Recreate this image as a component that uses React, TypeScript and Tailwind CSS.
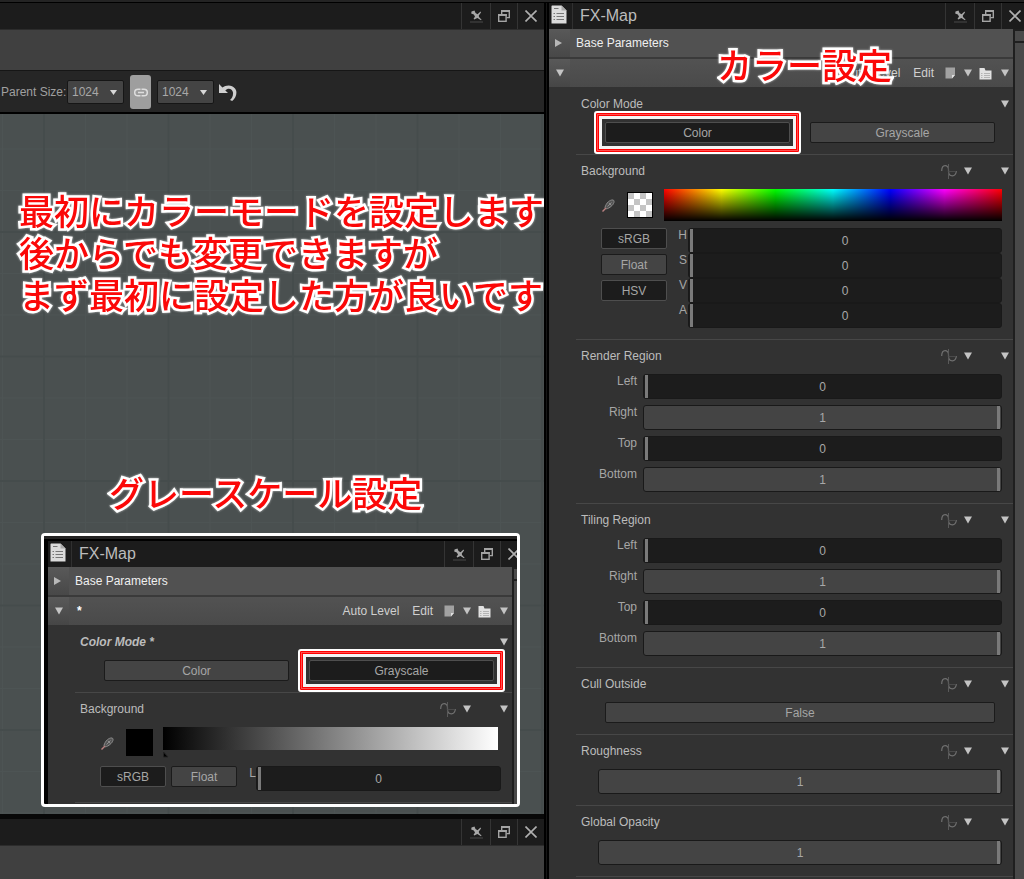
import { useId } from "react";
import type { ReactNode } from "react";

function PinIcon() {
  return (
    <svg width="13" height="13" viewBox="0 0 13 13" fill="#a8a8a8">
      <path d="M1.5 1.5 L4.5 0.5 L5.5 3 L7.5 4.2 L10.5 1.6 L11 2.4 L8.8 5.6 L9 7 L11.6 9.8 L11 10.2 L7.4 8 L4.2 9.6 L3.6 8.8 L5 6.4 L3.8 4.4 L1.2 3.4 Z" />
      <path d="M0 11.5 H13 V12.5 H0 Z" fill="#484848" />
    </svg>
  );
}

function RestoreIcon() {
  return (
    <svg width="12" height="12" viewBox="0 0 12 12" fill="none" stroke="#a4a4a4" strokeWidth="1.4">
      <path d="M3.7 4 V0.7 H11.3 V7.6 H8.5" />
      <path d="M3 1 H12" strokeWidth="2" />
      <rect x="0.7" y="4.7" width="7.4" height="6.6" />
      <path d="M0 5 H8.8" strokeWidth="2" />
    </svg>
  );
}

function CloseIcon() {
  return (
    <svg width="12" height="12" viewBox="0 0 12 12" stroke="#b0b0b0" strokeWidth="1.6">
      <path d="M0.5 0.5 L11.5 11.5 M11.5 0.5 L0.5 11.5" />
    </svg>
  );
}

function DocIcon() {
  return (
    <svg width="16" height="19" viewBox="0 0 16 19">
      <path d="M1 0.5 H10.5 L15.5 5.5 V18.5 H0.5 V1 Z" fill="#dcdcdc" />
      <path d="M10.5 0.5 V5.5 H15.5 Z" fill="#a9a9a9" />
      <path d="M3 3.5 H7.5 M5.5 8.5 H13 M5.5 11.5 H13 M5.5 14.5 H13 M2.5 8.5 H4 M2.5 11.5 H4 M2.5 14.5 H4" stroke="#777" />
    </svg>
  );
}

function NoteIcon() {
  return (
    <svg width="11" height="12" viewBox="0 0 11 12">
      <path d="M0.5 0.5 H10 V8 L7 11.5 H0.5 Z" fill="#a2a2a2" />
      <path d="M10 8 H7 V11.5 Z" fill="#e0e0e0" />
    </svg>
  );
}

function PresetIcon() {
  return (
    <svg width="13" height="13" viewBox="0 0 13 13">
      <path d="M0.5 1 H5.5 L6.5 3.5 H12.5 V12.5 H0.5 Z" fill="#e2e2e2" />
      <path d="M2 6.5 H3.5 M5 6.5 H11 M2 8.5 H3.5 M5 8.5 H11 M2 10.5 H3.5 M5 10.5 H11" stroke="#b4b4b4" />
    </svg>
  );
}

function WaveIcon() {
  return (
    <svg width="16" height="15" viewBox="0 0 16 15" fill="none" stroke="#707070">
      <path d="M0.7 7 C0.7 -0.4 7.5 0.4 7.5 5.5 V7.5 C7.5 13 15.3 13.6 15.3 7" strokeWidth="1.2" />
      <path d="M7.5 0 V15" stroke="#5a5a5a" />
      <path d="M7.5 7.5 H15" stroke="#4a4a4a" />
    </svg>
  );
}

function PipetteIcon() {
  return (
    <svg width="13" height="13" viewBox="0 0 13 13" fill="none" stroke="#8c8c8c">
      <path d="M3 8.5 C4 4 8 0.5 11 1 C13 1.5 12 5 9.5 7 C7.5 9 5.5 9.5 4.5 10 Z" fill="#555" />
      <path d="M5.5 7.5 L9.5 3.5 M7 4 L9.5 6.5" />
      <path d="M0.5 12.5 L4 9" stroke="#b98080" strokeWidth="1.4" />
    </svg>
  );
}

function LinkIcon() {
  return (
    <svg width="14" height="9" viewBox="0 0 14 9" fill="none" stroke="#dedede" strokeWidth="1.5">
      <path d="M6.5 1.2 H4 A3.3 3.3 0 0 0 4 7.8 H6.5 M7.5 1.2 H10 A3.3 3.3 0 0 1 10 7.8 H7.5 M4 4.5 H10" />
    </svg>
  );
}

function UndoIcon() {
  return (
    <svg width="18" height="17" viewBox="0 0 18 17" fill="#cfcfcf">
      <path d="M0 0 V9 H9 L6.3 6.4 C9 3.6 13.4 4.6 14 8.6 C14.3 11.6 13 14.2 11 16 L13.2 17 C17.2 13.5 18.8 8 16 4.4 C13 0.4 7 0.8 3.4 3.4 Z" />
    </svg>
  );
}

function Down() {
  return (
    <svg width="8" height="8" viewBox="0 0 8 8" className="shrink-0" fill="#c4c4c4">
      <path d="M0 0.5 H8 L4 7.5 Z" />
    </svg>
  );
}

function TitleBar({ title }: { title?: string }) {
  return (
    <div className="flex h-[26px] shrink-0 items-stretch bg-[#1c1c1c]">
      {title && (
        <>
          <div className="flex w-[24px] items-start border-r border-[#303030] pt-0.5 pl-0.5">
            <DocIcon />
          </div>
          <h2 className="flex items-center pl-[7px] text-[16px] text-[#bcbcbc]">{title}</h2>
        </>
      )}
      <div className="flex-1" />
      <button aria-label="Pin" className="flex w-[29px] items-center justify-center border-l border-[#343434]">
        <PinIcon />
      </button>
      <button aria-label="Restore" className="flex w-[27px] items-center justify-center border-l border-[#343434]">
        <RestoreIcon />
      </button>
      <button aria-label="Close" className="flex w-[27px] items-center justify-center border-l border-[#343434]">
        <CloseIcon />
      </button>
    </div>
  );
}

function Toggle({ label, pressed, marked, className }: { label: string; pressed?: boolean; marked?: boolean; className?: string }) {
  return (
    <button
      aria-pressed={!!pressed}
      className={`relative h-[21px] rounded-[2px] border text-[#a6a6a6] ${
        pressed ? "border-[#4e4e4e] bg-[#1c1c1c]" : "border-[#1b1b1b] bg-[#444]"
      } ${className ?? ""}`}
    >
      {label}
      {marked && (
        <span className="pointer-events-none absolute -inset-[12px] rounded-[3px] border-2 border-white shadow-[inset_0_0_0_1px_#f00,inset_0_0_0_2px_#ff5050,inset_0_0_0_3px_#f00,inset_0_0_0_6px_#f4f4f4]" />
      )}
    </button>
  );
}

function Slider({ id, value, label }: { id?: string; value: number; label?: string }) {
  return (
    <div className="grid h-[25px] flex-1">
      <input
        id={id}
        aria-label={label}
        type="range"
        min={0}
        max={1}
        step={0.01}
        defaultValue={value}
        className={`col-start-1 row-start-1 h-full w-full appearance-none rounded-[3px] border border-[#191919] px-px [&::-webkit-slider-thumb]:h-[23px] [&::-webkit-slider-thumb]:w-[3px] [&::-webkit-slider-thumb]:appearance-none [&::-webkit-slider-thumb]:bg-[#7a7a7a] ${
          value ? "bg-[#444]" : "bg-[#1c1c1c]"
        }`}
      />
      <span className="pointer-events-none col-start-1 row-start-1 self-center text-center text-[#a8a8a8]">{value}</span>
    </div>
  );
}

function LabeledSlider({ label, value, labelClass }: { label: string; value: number; labelClass: string }) {
  const id = useId();
  return (
    <div className="flex items-start">
      <label htmlFor={id} className={`leading-[14px] text-[#a6a6a6] ${labelClass}`}>
        {label}
      </label>
      <Slider id={id} value={value} />
    </div>
  );
}

function Section({ title, edited, first, children }: { title: string; edited?: boolean; first?: boolean; children?: ReactNode }) {
  return (
    <section className={`ml-[27px] pb-[11px] ${first ? "pt-px" : "border-t border-[#474747]"}`}>
      <div className="mb-0.5 flex h-8 items-center pr-1 pl-[5px]">
        <h3 className={`flex-1 text-[#bcbcbc] ${edited ? "font-bold italic" : ""}`}>{title}</h3>
        {!first && (
          <>
            <WaveIcon />
            <button aria-label={`${title} function`} className="mr-[29px] ml-[7px]">
              <Down />
            </button>
          </>
        )}
        <button aria-label={`${title} menu`}>
          <Down />
        </button>
      </div>
      {children}
    </section>
  );
}

function Region({ title }: { title: string }) {
  const sides = [
    { label: "Left", value: 0 },
    { label: "Right", value: 1 },
    { label: "Top", value: 0 },
    { label: "Bottom", value: 1 },
  ];
  return (
    <Section title={title}>
      <div className="flex flex-col gap-[6px] pr-[11px]">
        {sides.map((side) => (
          <LabeledSlider key={side.label} {...side} labelClass="w-[67px] pr-[6px] text-right" />
        ))}
      </div>
    </Section>
  );
}

function ColorBackground() {
  return (
    <Section title="Background">
      <div className="mb-[7px] flex items-center pr-[11px] pl-[26px]">
        <PipetteIcon />
        <div className="mr-[11px] ml-[12px] size-[26px] border border-black bg-[conic-gradient(#fff_25%,#c4c4c4_0_50%,#fff_0_75%,#c4c4c4_0)] bg-[length:12px_12px]" />
        <div className="h-8 flex-1 bg-[linear-gradient(to_bottom,transparent,#000),linear-gradient(to_right,#f00,#ff0_17%,#0f0_33%,#0ff_50%,#00f_67%,#f0f_83%,#f00)]" />
      </div>
      <div className="flex pr-[11px] pl-[25px]">
        <div className="flex w-[66px] flex-col gap-[5px]">
          <Toggle label="sRGB" pressed />
          <Toggle label="Float" />
          <Toggle label="HSV" pressed />
        </div>
        <div className="flex flex-1 flex-col">
          {["H", "S", "V", "A"].map((channel) => (
            <LabeledSlider key={channel} label={channel} value={0} labelClass="w-[21px] pr-px text-right" />
          ))}
        </div>
      </div>
    </Section>
  );
}

function GrayBackground() {
  return (
    <Section title="Background">
      <div className="flex items-start pr-[14px] pl-[26px]">
        <div className="mt-[10px]">
          <PipetteIcon />
        </div>
        <div className="mt-[2px] mr-[10px] ml-[12px] size-[27px] bg-black" />
        <div className="flex-1">
          <div className="h-[23px] bg-[linear-gradient(to_right,#000,#fff)]" />
          <svg width="6" height="8" viewBox="0 0 6 8" className="block">
            <path d="M0.5 2 L5 7 H0.5 Z" fill="#000" stroke="#222" />
          </svg>
        </div>
      </div>
      <div className="mt-[8px] flex items-start pr-[11px] pl-[25px]">
        <Toggle label="sRGB" pressed className="w-[66px]" />
        <Toggle label="Float" className="ml-[5px] w-[66px]" />
        <div className="flex-1">
          <LabeledSlider label="L" value={0} labelClass="w-[19px] text-right" />
        </div>
      </div>
    </Section>
  );
}

function FxMapPanel({ grayscale, children }: { grayscale?: boolean; children?: ReactNode }) {
  return (
    <div className="-mr-1 flex flex-1 flex-col">
      <TitleBar title="FX-Map" />
      <div className="flex flex-1">
        <div className="min-w-0 flex-1 bg-[#323232]">
          <div className="flex h-[30px] items-stretch border-b-2 border-[#3a3a3a] bg-[#515151]">
            <button aria-label="Expand" className="flex w-[21px] items-center justify-center bg-linear-to-b from-[#595959] to-[#484848] pr-1">
              <svg width="8" height="8" viewBox="0 0 8 8" fill="#b8b8b8">
                <path d="M1 0 L8 4 L1 8 Z" />
              </svg>
            </button>
            <h3 className="flex items-center pl-[6px] text-[#efefef]">Base Parameters</h3>
          </div>
          <div className="flex h-[28px] items-center bg-linear-to-b from-[#525252] to-[#4a4a4a] pr-1 text-[#d0d0d0]">
            <button aria-label="Collapse" className="flex h-full w-[21px] items-center justify-center bg-linear-to-b from-[#595959] to-[#464646]">
              <Down />
            </button>
            <span className="flex-1 pl-[8px] font-bold text-white">{grayscale ? "*" : ""}</span>
            <button>Auto Level</button>
            <button className="ml-[13px]">Edit</button>
            <button aria-label="Comment" className="ml-[11px]">
              <NoteIcon />
            </button>
            <button aria-label="Comment menu" className="ml-[8px]">
              <Down />
            </button>
            <button aria-label="Presets" className="ml-[7px]">
              <PresetIcon />
            </button>
            <button aria-label="Presets menu" className="ml-[9px]">
              <Down />
            </button>
          </div>
          <Section title={grayscale ? "Color Mode *" : "Color Mode"} edited={grayscale} first>
            <div className="flex gap-5 pr-[18px] pl-[29px]">
              <Toggle label="Color" pressed={!grayscale} marked={!grayscale} className="flex-1" />
              <Toggle label="Grayscale" pressed={grayscale} marked={grayscale} className="flex-1" />
            </div>
          </Section>
          {children}
        </div>
        {/* scrollbar */}
        <div className="w-[15px] border-l-2 border-[#1f1f1f] bg-[#494949]">
          <div className="h-[14px] border-y-2 border-[#1f1f1f] bg-[#4a4a4a]" />
        </div>
      </div>
    </div>
  );
}

function SizeSelect({ id, label }: { id: string; label?: string }) {
  return (
    <div className="grid h-6 w-[57px] items-center">
      <select
        id={id}
        aria-label={label}
        className="col-start-1 row-start-1 h-6 appearance-none rounded-[2px] border border-[#161616] bg-[#444] pl-[4px] text-[#a8a8a8]"
      >
        <option>1024</option>
      </select>
      <svg width="7" height="5" viewBox="0 0 7 5" fill="#d8d8d8" className="pointer-events-none col-start-1 row-start-1 mr-[7px] justify-self-end">
        <path d="M0 0 H7 L3.5 5 Z" />
      </svg>
    </div>
  );
}

function Caption({ children, className }: { children: ReactNode; className?: string }) {
  return (
    <p
      className={`text-[35px] leading-[42px] font-medium whitespace-nowrap text-[#fb0808] drop-shadow-[0_0_1px_rgba(255,255,255,0.6)] [-webkit-text-stroke:5px_#fff] [paint-order:stroke_fill] [stroke-linejoin:round] font-['Noto_Sans_CJK_JP',sans-serif] ${className ?? ""}`}
    >
      {children}
    </p>
  );
}

export default function App() {
  return (
    <div className="flex h-screen flex-col overflow-hidden border-t-2 border-[#242424] bg-black pt-px text-[12px] leading-4 font-['Liberation_Sans',Arial,sans-serif]">
      <div className="flex min-h-0 flex-1">
        <main className="flex min-w-0 flex-1 flex-col">
          <TitleBar />
          <div className="h-[41px] shrink-0 border-t border-[#2c2c2c] bg-[#404040]" />
          <div className="flex h-[44px] shrink-0 items-center border-t border-b-2 border-t-[#161616] border-b-black bg-[#262626] pt-px pl-px text-[#a0a0a0]">
            <label htmlFor="parent-width" className="w-[66px] shrink-0">
              Parent Size:
            </label>
            <SizeSelect id="parent-width" />
            <button aria-label="Link sizes" className="mr-[6px] ml-[6px] flex h-[34px] w-[21px] items-center justify-center rounded-[3px] bg-[#9e9e9e]">
              <LinkIcon />
            </button>
            <SizeSelect id="parent-height" label="Parent height" />
            <button aria-label="Undo" className="ml-[5px]">
              <UndoIcon />
            </button>
          </div>
          <div className="relative flex-1 overflow-hidden bg-[#4a5050] pb-[6px]">
            <svg className="absolute inset-0 size-full">
              <defs>
                <pattern id="minor" width="41.5" height="41.5" x="2" y="34.5" patternUnits="userSpaceOnUse">
                  <path d="M0.5 0 V41.5 M0 0.5 H41.5" stroke="#4d5454" />
                </pattern>
                <pattern id="major" width="124.5" height="124.5" x="43" y="117" patternUnits="userSpaceOnUse">
                  <path d="M1 0 V124.5 M0 1 H124.5" stroke="#454c4c" strokeWidth="2" />
                </pattern>
              </defs>
              <rect width="100%" height="100%" fill="url(#minor)" />
              <rect width="100%" height="100%" fill="url(#major)" />
            </svg>
            <div className="relative pt-[75px]">
              <Caption className="pl-[19px]">
                最初にカラーモードを設定します
                <br />
                後からでも変更できますが
                <br />
                まず最初に設定した方が良いです
              </Caption>
              <Caption className="mt-[156px] pl-[109px]">グレースケール設定</Caption>
              <div className="mt-5 ml-[41px] flex h-[274px] w-[479px] flex-col overflow-hidden rounded-[4px] border-3 border-white bg-black">
                <div className="mb-0.5 h-[3px] shrink-0 bg-[#242424]" />
                <div className="flex min-h-0 flex-1 pl-1">
                  <div className="-mr-[6px] flex flex-1">
                    <FxMapPanel grayscale>
                      <GrayBackground />
                      <div className="ml-[27px] border-t border-[#474747]" />
                    </FxMapPanel>
                  </div>
                </div>
              </div>
            </div>
          </div>
          <div className="shrink-0 border-t-[5px] border-[#080808]">
            <TitleBar />
            <div className="h-[34px] border-t border-[#2c2c2c] bg-[#404040]" />
          </div>
        </main>
        <div className="w-[5px] shrink-0 border-x-2 border-black bg-[#161616]" />
        <aside className="relative flex w-[475px] shrink-0 overflow-hidden">
          <FxMapPanel>
            <ColorBackground />
            <Region title="Render Region" />
            <Region title="Tiling Region" />
            <Section title="Cull Outside">
              <div className="flex pr-[18px] pl-[29px]">
                <Toggle label="False" className="flex-1" />
              </div>
            </Section>
            <Section title="Roughness">
              <div className="flex pr-[11px] pl-[22px]">
                <Slider value={1} label="Roughness" />
              </div>
            </Section>
            <Section title="Global Opacity">
              <div className="flex pr-[11px] pl-[22px]">
                <Slider value={1} label="Global Opacity" />
              </div>
            </Section>
            <div className="ml-[27px] border-t border-[#474747]" />
          </FxMapPanel>
          <Caption className="absolute top-[40px] left-[168px]">カラー設定</Caption>
        </aside>
      </div>
    </div>
  );
}
